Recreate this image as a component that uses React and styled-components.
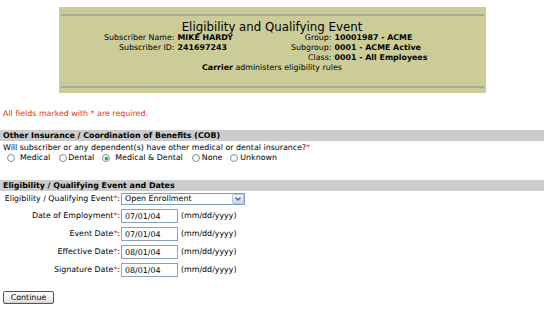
import React from "react";
import styled, { createGlobalStyle } from "styled-components";

const GlobalStyle = createGlobalStyle`
  html, body { margin: 0; padding: 0; background: #fff; }
  body {
    font-family: "DejaVu Sans", Verdana, sans-serif;
    font-size: 7.9px;
    line-height: 10px;
    color: #000;
  }
`;

const Page = styled.div`
  width: 544px;
  padding-top: 7px;
`;

const Header = styled.div`
  width: 427px;
  height: 86px;
  margin: 0 auto;
  box-sizing: border-box;
  padding: 7px 2px 5px;
  background: #cccc99;
  display: flex;
  flex-direction: column;
`;

const Rule = styled.div`
  height: 2px;
  background: #a8a8a4;
  margin-top: ${(p) => (p.$bottom ? "auto" : "0")};
`;

const Title = styled.div`
  margin-top: 5px;
  text-align: center;
  font-size: 11.8px;
  line-height: 12px;
`;

const InfoGrid = styled.div`
  display: grid;
  grid-template-columns: 114px 97px 60px 1fr;
  line-height: 10px;
`;

const InfoLabel = styled.span`
  text-align: right;
  white-space: nowrap;
`;

const InfoValue = styled.span`
  padding-left: 3px;
  font-weight: bold;
  white-space: nowrap;
`;

const InfoNote = styled.div`
  grid-column: 1 / -1;
  text-align: center;
  b { font-weight: bold; }
`;

const Notice = styled.div`
  margin-top: 16px;
  padding-left: 3px;
  color: #dd3a14;
`;

const SectionBar = styled.div`
  margin-top: ${(p) => p.$top}px;
  height: 11px;
  line-height: 11px;
  padding-left: 3px;
  background: #cccccc;
  font-weight: bold;
`;

const Question = styled.div`
  margin-top: 2px;
  padding-left: 3px;
`;

const Req = styled.span`
  color: #ff1a00;
`;

const RadioRow = styled.div`
  display: flex;
  align-items: center;
  height: 10px;
  padding-left: 3px;
`;

const RadioOption = styled.label`
  display: flex;
  align-items: center;
  margin-left: ${(p) => p.$before}px;
  gap: ${(p) => p.$gap}px;
`;

const RadioCircle = styled.span`
  width: 8px;
  height: 8px;
  box-sizing: border-box;
  border-radius: 50%;
  border: 1px solid #7893ae;
  background: radial-gradient(circle at 60% 60%, #ffffff 40%, #dfe3ea 100%);
  display: flex;
  align-items: center;
  justify-content: center;
  &::after {
    content: "";
    width: 3px;
    height: 3px;
    border-radius: 50%;
    background: ${(p) => (p.$checked ? "#2da02d" : "transparent")};
    box-shadow: ${(p) => (p.$checked ? "0 0 0 0.6px #8fd08f" : "none")};
  }
`;

const FormGrid = styled.div`
  margin-top: 2px;
  display: grid;
  grid-template-columns: 121px auto 1fr;
  row-gap: 4px;
  align-items: center;
`;

const FieldLabel = styled.span`
  text-align: right;
  padding-right: 1px;
  white-space: nowrap;
`;

const Select = styled.div`
  grid-column: 2 / 4;
  width: 124px;
  height: 12px;
  box-sizing: border-box;
  border: 1px solid #7f9db9;
  display: flex;
  align-items: center;
  background: #fff;
  span {
    flex: 1;
    padding-left: 3px;
  }
`;

const SelectArrow = styled.div`
  width: 12px;
  height: 10px;
  box-sizing: border-box;
  border: 1px solid #b8c8e0;
  border-radius: 1px;
  background: linear-gradient(#eef3fc, #c9d6ee);
  display: flex;
  align-items: center;
  justify-content: center;
`;

const DateInput = styled.input`
  width: 57px;
  height: 14px;
  box-sizing: border-box;
  margin: 0;
  padding: 0 0 0 3px;
  border: 1px solid #8aa3bd;
  font-family: inherit;
  font-size: 7.9px;
  color: #000;
  outline: none;
`;

const Hint = styled.span`
  padding-left: 3px;
  white-space: nowrap;
`;

const Continue = styled.button`
  margin: 14px 0 0 3px;
  width: 51px;
  height: 13px;
  padding: 0;
  box-sizing: border-box;
  border: 1px solid #3b5a7a;
  border-radius: 2px;
  background: linear-gradient(#ffffff, #ecebe6 70%, #d6d4cc);
  font-family: inherit;
  font-size: 7.9px;
  line-height: 10px;
  color: #000;
`;

const dates = [
  ["Date of Employment", "07/01/04"],
  ["Event Date", "07/01/04"],
  ["Effective Date", "08/01/04"],
  ["Signature Date", "08/01/04"],
];

const radios = [
  { label: "Medical", before: 4, gap: 5 },
  { label: "Dental", before: 9, gap: 1 },
  { label: "Medical & Dental", before: 8, gap: 5, checked: true },
  { label: "None", before: 9, gap: 2 },
  { label: "Unknown", before: 8, gap: 2 },
];

export default function App() {
  return (
    <Page>
      <GlobalStyle />
      <Header>
        <Rule />
        <Title>Eligibility and Qualifying Event</Title>
        <InfoGrid>
          <InfoLabel>Subscriber Name:</InfoLabel>
          <InfoValue>MIKE HARDY</InfoValue>
          <InfoLabel>Group:</InfoLabel>
          <InfoValue>10001987 - ACME</InfoValue>
          <InfoLabel>Subscriber ID:</InfoLabel>
          <InfoValue>241697243</InfoValue>
          <InfoLabel>Subgroup:</InfoLabel>
          <InfoValue>0001 - ACME Active</InfoValue>
          <span />
          <span />
          <InfoLabel>Class:</InfoLabel>
          <InfoValue>0001 - All Employees</InfoValue>
          <InfoNote>
            <b>Carrier</b> administers eligibility rules
          </InfoNote>
        </InfoGrid>
        <Rule $bottom />
      </Header>

      <Notice>All fields marked with * are required.</Notice>

      <SectionBar $top={11}>Other Insurance / Coordination of Benefits (COB)</SectionBar>
      <Question>
        Will subscriber or any dependent(s) have other medical or dental insurance?<Req>*</Req>
      </Question>
      <RadioRow>
        {radios.map((r) => (
          <RadioOption key={r.label} $before={r.before} $gap={r.gap}>
            <RadioCircle $checked={r.checked} />
            {r.label}
          </RadioOption>
        ))}
      </RadioRow>

      <SectionBar $top={17}>Eligibility / Qualifying Event and Dates</SectionBar>
      <FormGrid>
        <FieldLabel>
          Eligibility / Qualifying Event<Req>*</Req>:
        </FieldLabel>
        <Select>
          <span>Open Enrollment</span>
          <SelectArrow>
            <svg width="6" height="4" viewBox="0 0 6 4">
              <path d="M0.5 0.5 L3 3 L5.5 0.5" fill="none" stroke="#4d6185" strokeWidth="1.3" />
            </svg>
          </SelectArrow>
        </Select>
        {dates.map(([label, value]) => (
          <React.Fragment key={label}>
            <FieldLabel>
              {label}
              <Req>*</Req>:
            </FieldLabel>
            <DateInput defaultValue={value} />
            <Hint>(mm/dd/yyyy)</Hint>
          </React.Fragment>
        ))}
      </FormGrid>

      <Continue>Continue</Continue>
    </Page>
  );
}
